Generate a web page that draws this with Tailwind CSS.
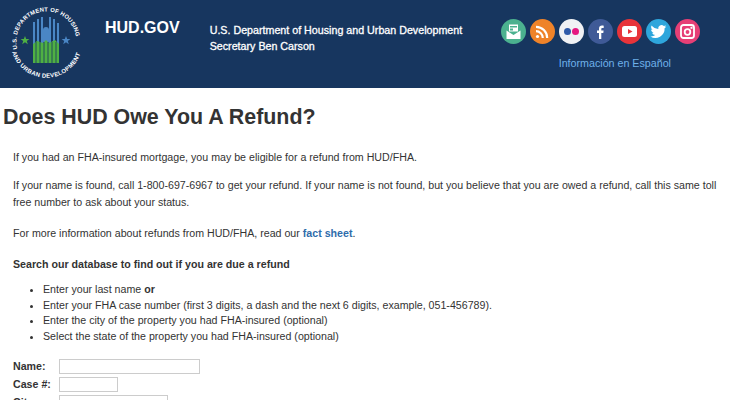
<!DOCTYPE html>
<html lang="en">
<head>
    <meta charset="UTF-8">
    <title>Does HUD Owe You A Refund?</title>
    <script src="https://cdn.jsdelivr.net/npm/@tailwindcss/browser@4"></script>
</head>
<body class="bg-white text-[#333] font-['Liberation_Sans',Arial,sans-serif] w-[730px] h-[400px] overflow-hidden">
    <header class="h-[88px] bg-[#17365f] flex text-white relative">
        <svg class="ml-[9px] mt-[4px] w-[76px] h-[76px] shrink-0" viewBox="0 0 76 76">
            <defs>
                <path id="seal-top" d="M8.400 45 A30 30 0 1 1 67.400 36"/>
                <path id="seal-bottom" d="M3 48 A36 36 0 0 0 72 48"/>
            </defs>
            <text font-size="5.800" font-weight="700" fill="#fff" font-family="Liberation Sans"><textPath href="#seal-top" textLength="97">U.S. DEPARTMENT OF HOUSING</textPath></text>
            <text font-size="6" font-weight="700" fill="#fff" font-family="Liberation Sans"><textPath href="#seal-bottom" textLength="90">AND URBAN DEVELOPMENT</textPath></text>
            <path d="M24 18h2v22h-2zM28 15h2v25h-2zM32 13h2v27h-2zM40 13h2v27h-2zM44 15h2v25h-2zM48 19h2v21h-2z" fill="#4a86c5"/>
            <rect x="34" y="23" width="6" height="17" rx="3" fill="#4a86c5"/>
            <path d="M24 40l4-3 6 2 3-3 3 3 6-3 4 4v19H24z" fill="#4fb043"/>
            <path d="M27 38v21M31 38v21M35 38v21M39 38v21M43 38v21M47 38v21" stroke="#17365f" stroke-width=".8"/>
            <path d="M16 32l1.200 3h3.200l-2.600 2 1 3.200-2.800-2-2.800 2 1-3.200-2.600-2h3.200z" fill="#4fb043"/>
            <path d="M57 32l1.200 3h3.200l-2.600 2 1 3.200-2.800-2-2.800 2 1-3.200-2.600-2h3.200z" fill="#4a86c5"/>
        </svg>
        <div class="ml-[20px] mt-[18px] text-[16px] leading-5 font-bold whitespace-nowrap">HUD.GOV</div>
        <div class="ml-[30px] mt-[23px] text-[10.700px] leading-[15.500px] [-webkit-text-stroke:0.3px_#fff] whitespace-nowrap">
            <p>U.S. Department of Housing and Urban Development</p>
            <p>Secretary Ben Carson</p>
        </div>
        <div class="ml-auto mr-[30px] mt-[19px] w-[200px] flex flex-col items-center">
            <div class="flex gap-[4px]">
                <span class="w-[25px] h-[25px] rounded-full bg-[#4bb18f] flex items-center justify-center">
                    <svg class="w-[17px] h-[17px]" viewBox="0 0 17 17"><path d="M1.500 7.500L8.500 12l7-4.500V16h-14z" fill="#fff"/><rect x="4" y="1.500" width="9" height="7" fill="#fff"/><rect x="5" y="3" width="7" height="1.500" fill="#4bb18f"/><rect x="5" y="5.500" width="3" height="2" fill="#4bb18f"/></svg>
                </span>
                <span class="w-[25px] h-[25px] rounded-full bg-[#ef8329] flex items-center justify-center">
                    <svg class="w-[16px] h-[16px]" viewBox="0 0 16 16" fill="none" stroke="#fff" stroke-width="2.200"><circle cx="3.500" cy="12.500" r="1.600" fill="#fff" stroke="none"/><path d="M2 7.200a6.800 6.800 0 0 1 6.800 6.800M2 2.800A11.200 11.200 0 0 1 13.200 14"/></svg>
                </span>
                <span class="w-[25px] h-[25px] rounded-full bg-[#f0f1f4] flex items-center justify-center gap-[1px]">
                    <span class="w-[7px] h-[7px] rounded-full bg-[#2f5aa8]"></span>
                    <span class="w-[7px] h-[7px] rounded-full bg-[#e5167f]"></span>
                </span>
                <span class="w-[25px] h-[25px] rounded-full bg-[#3f5a97] flex items-center justify-center">
                    <svg class="w-[16px] h-[16px]" viewBox="0 0 16 16"><path d="M9.300 15V8.900h2l.3-2.400H9.300V5c0-.7.2-1.100 1.200-1.100h1.200V1.700C11.500 1.700 10.800 1.600 10 1.600 8.200 1.600 7 2.700 7 4.700v1.800H5v2.400h2V15z" fill="#fff"/></svg>
                </span>
                <span class="w-[25px] h-[25px] rounded-full bg-[#e8343a] flex items-center justify-center">
                    <svg class="w-[15px] h-[11px]" viewBox="0 0 15 11"><rect width="15" height="11" rx="2.500" fill="#fff"/><path d="M6 3l4.500 2.500L6 8z" fill="#e8343a"/></svg>
                </span>
                <span class="w-[25px] h-[25px] rounded-full bg-[#2ea6dc] flex items-center justify-center">
                    <svg class="w-[17px] h-[17px]" viewBox="0 0 24 24"><path d="M23 5c-.8.400-1.700.600-2.600.700.900-.600 1.600-1.400 2-2.500-.900.500-1.900.900-2.900 1.100a4.600 4.600 0 0 0-7.800 4.200C7.900 8.300 4.500 6.500 2.200 3.700c-1.200 2.100-.600 4.800 1.400 6.100-.700 0-1.400-.200-2.100-.600 0 2.200 1.600 4.100 3.700 4.600-.700.200-1.400.200-2.100.100.600 1.900 2.300 3.200 4.300 3.200A9.300 9.300 0 0 1 .600 19a13 13 0 0 0 20-11.600c.900-.600 1.700-1.400 2.400-2.400z" fill="#fff"/></svg>
                </span>
                <span class="w-[25px] h-[25px] rounded-full bg-[#e63f76] flex items-center justify-center">
                    <svg class="w-[15px] h-[15px]" viewBox="0 0 15 15" fill="none" stroke="#fff"><rect x="1" y="1" width="13" height="13" rx="2.500" stroke-width="1.800"/><circle cx="7.500" cy="8" r="2.800" stroke-width="1.800"/><rect x="10.500" y="2.800" width="2" height="2" fill="#fff" stroke="none"/></svg>
                </span>
            </div>
            <a class="mt-[12px] mr-[29px] self-end text-[10.700px] leading-[14px] text-[#6fb1ea] whitespace-nowrap">Información en Español</a>
        </div>
    </header>
    <main class="text-[10.650px] leading-[17px]">
        <h1 class="mt-[17px] ml-[3px] text-[21.400px] leading-6 font-bold">Does HUD Owe You A Refund?</h1>
        <div class="ml-[13px] mr-[8px] mt-[20px]">
            <p>If you had an FHA-insured mortgage, you may be eligible for a refund from HUD/FHA.</p>
            <p class="mt-[11px]">If your name is found, call 1-800-697-6967 to get your refund. If your name is not found, but you believe that you are owed a refund, call this same toll free number to ask about your status.</p>
            <p class="mt-[14px]">For more information about refunds from HUD/FHA, read our <a class="font-bold text-[#2f6cab]">fact sheet</a>.</p>
            <p class="mt-[14px] font-bold">Search our database to find out if you are due a refund</p>
            <ul class="mt-[9px] ml-[17px] list-disc pl-[13px] leading-[15.700px]">
                <li>Enter your last name <b>or</b></li>
                <li>Enter your FHA case number (first 3 digits, a dash and the next 6 digits, example, 051-456789).</li>
                <li>Enter the city of the property you had FHA-insured (optional)</li>
                <li>Select the state of the property you had FHA-insured (optional)</li>
            </ul>
            <form class="mt-[14px] flex flex-col gap-[3px] font-bold">
                <label class="flex items-center h-[15px]"><span class="w-[46px]">Name:</span><input type="text" class="w-[141px] h-[15px] border border-[#ccc] bg-white"></label>
                <label class="flex items-center h-[15px]"><span class="w-[46px]">Case #:</span><input type="text" class="w-[59px] h-[15px] border border-[#ccc] bg-white"></label>
                <label class="flex items-center h-[15px]"><span class="w-[46px]">City:</span><input type="text" class="w-[109px] h-[15px] border border-[#ccc] bg-white"></label>
            </form>
        </div>
    </main>
</body>
</html>
